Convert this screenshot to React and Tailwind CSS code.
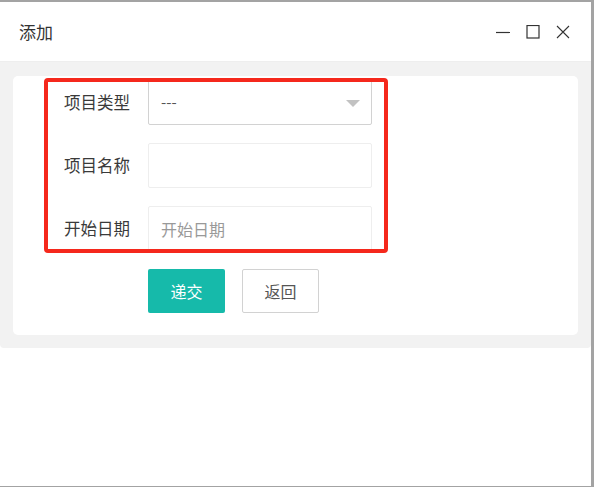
import React from "react";

const FONT = { fontFamily: '"Microsoft YaHei", "Noto Sans CJK SC", "Noto Sans", sans-serif' };

function Field({ label, children }) {
  return (
    <div className="flex h-[45px] items-center">
      <label className="w-[135px] shrink-0 pr-[18px] text-right text-[16.5px] text-[#3a3a3a]">{label}</label>
      {children}
    </div>
  );
}

export default function App() {
  return (
    <div
      className="relative box-border h-[487px] w-[594px] overflow-hidden border-t-2 border-r-[3px] border-b border-[#a3a3a3] bg-white"
      style={FONT}
    >
      {/* title bar */}
      <div className="flex h-[60px] items-center justify-between border-b border-[#eee] pl-[19px] pr-[21px]">
        <span className="text-[17px] text-[#333]">添加</span>
        <div className="flex items-center gap-4 text-[#333]">
          <svg width="14" height="14" viewBox="0 0 14 14">
            <path d="M0 7.5h14" stroke="#333" strokeWidth="1.2" />
          </svg>
          <svg width="14" height="14" viewBox="0 0 14 14">
            <rect x="1" y="0.5" width="12" height="12.5" fill="none" stroke="#333" strokeWidth="1.2" />
          </svg>
          <svg width="14" height="14" viewBox="0 0 14 14">
            <path d="M1 1l12 12M13 1L1 13" stroke="#333" strokeWidth="1.1" />
          </svg>
        </div>
      </div>

      {/* body */}
      <div className="rounded-b-[4px] bg-[#f2f2f2] px-[13px] pt-[14px] pb-[13px]">
        <div className="flex flex-col gap-[18px] rounded-[5px] bg-white pt-1 pb-[22px]">
          <Field label="项目类型">
            <div className="relative flex h-[45px] w-[224px] items-center rounded-[2px] border border-[#d2d2d2] pl-[12px] text-[15px] text-[#555]">
              ---
              <span className="absolute right-[11px] top-[19px] h-0 w-0 border-x-[7px] border-t-[7px] border-x-transparent border-t-[#c2c2c2]" />
            </div>
          </Field>
          <Field label="项目名称">
            <input className="h-[45px] w-[224px] rounded-[2px] border border-[#eee] px-[12px] text-[15px] outline-none" />
          </Field>
          <Field label="开始日期">
            <input
              placeholder="开始日期"
              className="h-[45px] w-[224px] rounded-[2px] border border-[#eee] px-[12px] text-[16px] outline-none placeholder:text-[#999]"
            />
          </Field>
          <div className="flex gap-[17px] pl-[135px]">
            <button className="h-[44px] w-[77px] rounded-[2px] bg-[#16baaa] text-[16px] text-white">递交</button>
            <button className="h-[44px] w-[77px] rounded-[2px] border border-[#d2d2d2] bg-white text-[16px] text-[#555]">
              返回
            </button>
          </div>
        </div>
      </div>

      {/* highlight frame */}
      <div className="absolute left-[44px] top-[76px] h-[175px] w-[344px] rounded-[4px] border-4 border-[#f5281c]" />
    </div>
  );
}
